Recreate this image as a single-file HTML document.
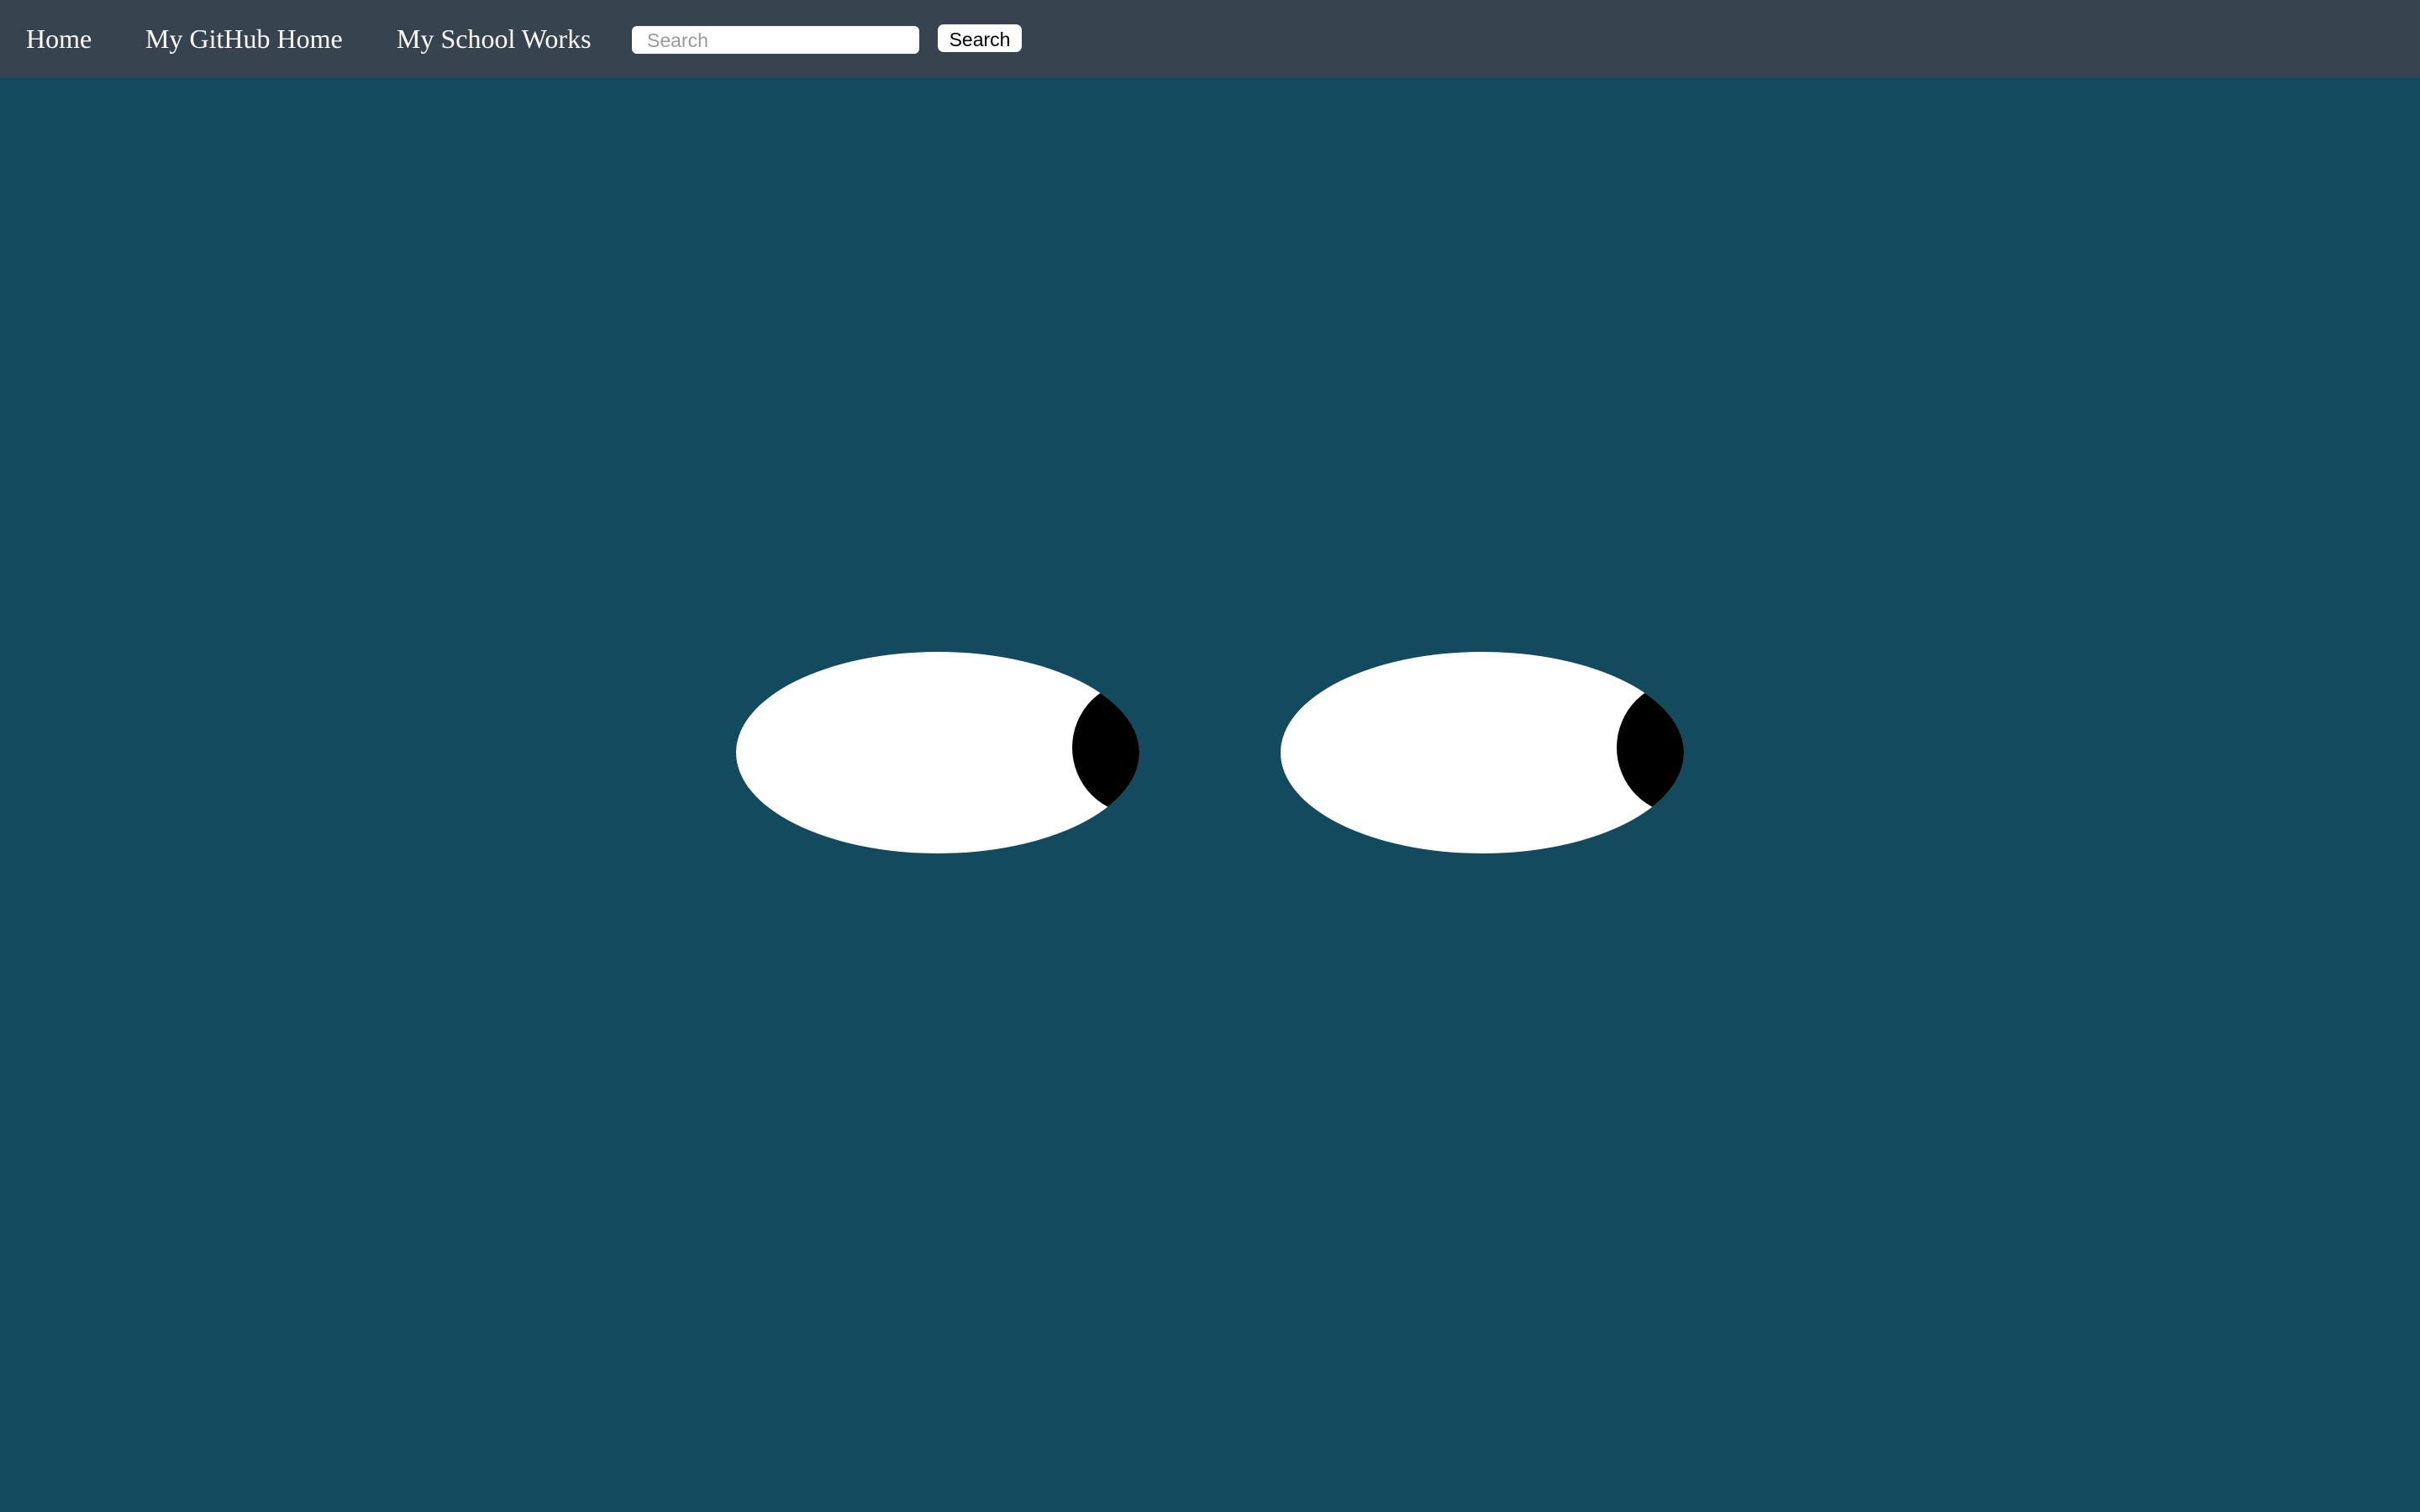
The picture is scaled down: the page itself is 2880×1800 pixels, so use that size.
<!DOCTYPE html>
<html><head><meta charset="utf-8"><style>
html,body{margin:0;padding:0;width:2880px;height:1800px;overflow:hidden;background:#134a5e;}
.nav{position:absolute;left:0;top:0;width:2880px;height:92px;background:#37444f;}
.nav a{position:absolute;top:28px;font-family:"Liberation Serif",serif;font-size:32px;color:#fff;text-decoration:none;white-space:nowrap;}
.inp{position:absolute;left:752px;top:31px;width:342px;height:33px;background:#fff;border-radius:6px;box-sizing:border-box;font-family:"Liberation Sans",sans-serif;font-size:23px;color:#9a9a9a;padding:4px 0 0 18px;}
.btn{position:absolute;left:1116px;top:29px;width:100px;height:33px;background:#fff;border-radius:7px;font-family:"Liberation Sans",sans-serif;font-size:23px;color:#000;text-align:center;line-height:36px;}
.eye{position:absolute;top:776px;width:480px;height:240px;border-radius:50%;background:#fff;overflow:hidden;}
.pupil{position:absolute;left:400px;top:34px;width:160px;height:160px;border-radius:50%;background:#000;}
</style></head><body>
<div class="nav">
<a style="left:31px">Home</a>
<a style="left:173px">My GitHub Home</a>
<a style="left:472px">My School Works</a>
<div class="inp">Search</div>
<div class="btn">Search</div>
</div>
<div class="eye" style="left:876px"><div class="pupil"></div></div>
<div class="eye" style="left:1524px"><div class="pupil"></div></div>
</body></html>
